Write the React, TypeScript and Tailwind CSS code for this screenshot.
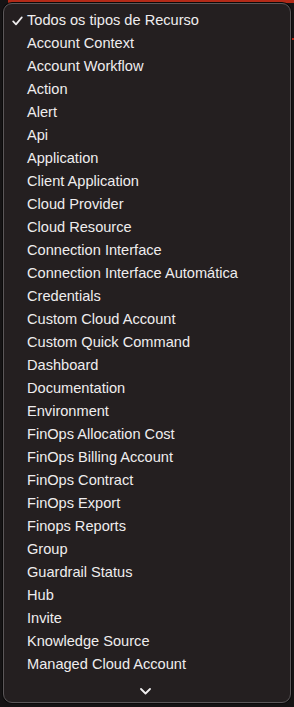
import React from "react";

const items = [
  "Account Context",
  "Account Workflow",
  "Action",
  "Alert",
  "Api",
  "Application",
  "Client Application",
  "Cloud Provider",
  "Cloud Resource",
  "Connection Interface",
  "Connection Interface Automática",
  "Credentials",
  "Custom Cloud Account",
  "Custom Quick Command",
  "Dashboard",
  "Documentation",
  "Environment",
  "FinOps Allocation Cost",
  "FinOps Billing Account",
  "FinOps Contract",
  "FinOps Export",
  "Finops Reports",
  "Group",
  "Guardrail Status",
  "Hub",
  "Invite",
  "Knowledge Source",
  "Managed Cloud Account",
];

export default function App() {
  return (
    <div
      className="relative w-[294px] h-[707px] bg-[#151314] overflow-hidden pt-[3px] pl-[3px]"
      style={{ fontFamily: '"Liberation Sans", Arial, sans-serif' }}
    >
      {/* bits of the page behind the menu */}
      <div className="absolute top-0 left-[8px] right-0 h-[3px] bg-[#b32a18]" />
      <div className="absolute top-[38px] right-0 w-[3px] h-[2px] bg-[#b32a18]" />

      <div className="relative w-[288px] h-[700px] rounded-[9px] border border-[#5b5759] bg-[#241f20] shadow-[0_0_0_1px_#0b0a0a] pt-[5px] flex flex-col">
        <div className="h-[23px] flex items-center text-[14.6px] text-[#efedee]">
          <span className="w-[23px] pl-[8px] flex items-center">
            <svg width="11" height="10" viewBox="0 0 11 10" fill="none">
              <path
                d="M1.2 5.4 L4 8.4 L9.8 1.4"
                stroke="#efedee"
                strokeWidth="1.7"
                strokeLinecap="round"
                strokeLinejoin="round"
              />
            </svg>
          </span>
          <span>Todos os tipos de Recurso</span>
        </div>
        {items.map((it) => (
          <div
            key={it}
            className="h-[23px] flex items-center pl-[23px] text-[14.6px] text-[#efedee]"
          >
            {it}
          </div>
        ))}
        <div className="flex justify-center pr-[3px] pt-[12px]">
          <svg width="11" height="7" viewBox="0 0 11 7" fill="none">
            <path
              d="M1 1 L5.5 5.5 L10 1"
              stroke="#efedee"
              strokeWidth="1.8"
              strokeLinecap="round"
              strokeLinejoin="round"
            />
          </svg>
        </div>
      </div>
    </div>
  );
}
